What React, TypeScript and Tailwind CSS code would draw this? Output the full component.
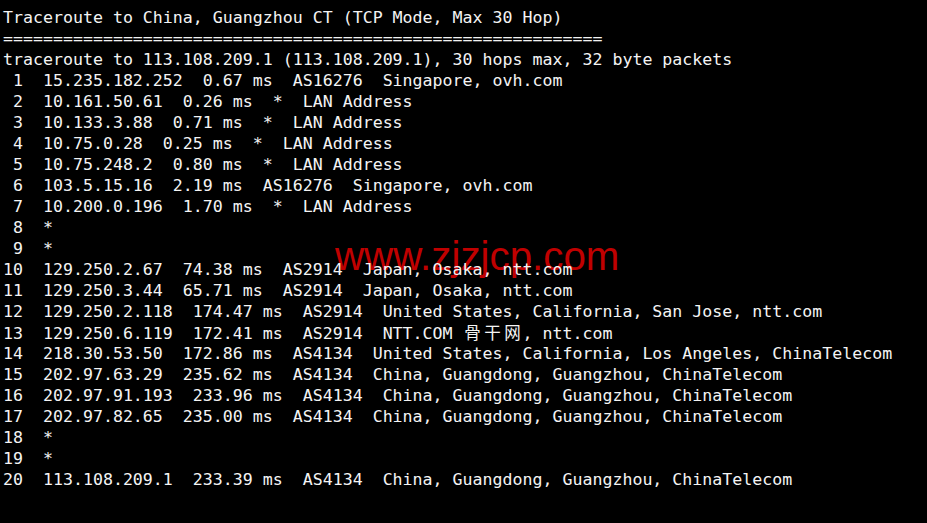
import React from 'react';

type Hop = {
  n: number;
  fields?: string[];
};

const hops: Hop[] = [
  { n: 1, fields: ['15.235.182.252', '0.67 ms', 'AS16276', 'Singapore, ovh.com'] },
  { n: 2, fields: ['10.161.50.61', '0.26 ms', '*', 'LAN Address'] },
  { n: 3, fields: ['10.133.3.88', '0.71 ms', '*', 'LAN Address'] },
  { n: 4, fields: ['10.75.0.28', '0.25 ms', '*', 'LAN Address'] },
  { n: 5, fields: ['10.75.248.2', '0.80 ms', '*', 'LAN Address'] },
  { n: 6, fields: ['103.5.15.16', '2.19 ms', 'AS16276', 'Singapore, ovh.com'] },
  { n: 7, fields: ['10.200.0.196', '1.70 ms', '*', 'LAN Address'] },
  { n: 8 },
  { n: 9 },
  { n: 10, fields: ['129.250.2.67', '74.38 ms', 'AS2914', 'Japan, Osaka, ntt.com'] },
  { n: 11, fields: ['129.250.3.44', '65.71 ms', 'AS2914', 'Japan, Osaka, ntt.com'] },
  { n: 12, fields: ['129.250.2.118', '174.47 ms', 'AS2914', 'United States, California, San Jose, ntt.com'] },
  { n: 13, fields: ['129.250.6.119', '172.41 ms', 'AS2914', 'NTT.COM 骨干网, ntt.com'] },
  { n: 14, fields: ['218.30.53.50', '172.86 ms', 'AS4134', 'United States, California, Los Angeles, ChinaTelecom'] },
  { n: 15, fields: ['202.97.63.29', '235.62 ms', 'AS4134', 'China, Guangdong, Guangzhou, ChinaTelecom'] },
  { n: 16, fields: ['202.97.91.193', '233.96 ms', 'AS4134', 'China, Guangdong, Guangzhou, ChinaTelecom'] },
  { n: 17, fields: ['202.97.82.65', '235.00 ms', 'AS4134', 'China, Guangdong, Guangzhou, ChinaTelecom'] },
  { n: 18 },
  { n: 19 },
  { n: 20, fields: ['113.108.209.1', '233.39 ms', 'AS4134', 'China, Guangdong, Guangzhou, ChinaTelecom'] },
];

// CJK glyphs take two terminal cells (20px)
function TermText({ text }: { text: string }) {
  const parts = text.split(/([\u4e00-\u9fff])/);
  return (
    <>
      {parts.map((p, i) =>
        /[\u4e00-\u9fff]/.test(p) ? (
          <span
            key={i}
            className="inline-block w-[20px] text-center text-[16.5px] font-['Noto_Sans_CJK_SC',sans-serif]"
          >
            {p}
          </span>
        ) : (
          <span key={i}>{p}</span>
        )
      )}
    </>
  );
}

export default function App() {
  const lines: string[] = [
    'Traceroute to China, Guangzhou CT (TCP Mode, Max 30 Hop)',
    '='.repeat(60),
    'traceroute to 113.108.209.1 (113.108.209.1), 30 hops max, 32 byte packets',
    ...hops.map((h) => {
      const num = String(h.n).padStart(2, ' ');
      return h.fields ? `${num}  ${h.fields.join('  ')}` : `${num}  *`;
    }),
  ];

  return (
    <div className="relative min-h-screen w-full overflow-hidden bg-black">
      {/* Watermark */}
      <div className="absolute left-[335px] top-[237px] text-[40.3px] leading-none text-[#c00000] font-['Liberation_Sans',Arial,sans-serif] whitespace-nowrap">
        www.zjzjcp.com
      </div>

      {/* Terminal output */}
      <div className="relative pl-[3px] pt-[7px] text-[16.6px] leading-[21px] text-[#f4f4f4] font-['DejaVu_Sans_Mono',monospace]">
        {lines.map((line, i) => (
          <div key={i} className="whitespace-pre h-[21px]">
            <TermText text={line} />
          </div>
        ))}
      </div>
    </div>
  );
}
